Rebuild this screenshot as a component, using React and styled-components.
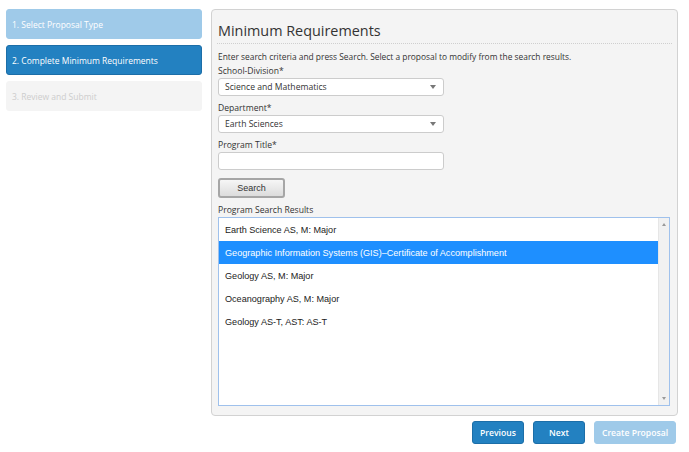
import React, { useState } from "react";
import styled, { createGlobalStyle } from "styled-components";

const steps = [
  { id: 1, label: "1. Select Proposal Type", state: "done" },
  { id: 2, label: "2. Complete Minimum Requirements", state: "active" },
  { id: 3, label: "3. Review and Submit", state: "todo" },
];

const results = [
  "Earth Science AS, M: Major",
  "Geographic Information Systems (GIS)\u2013Certificate of Accomplishment",
  "Geology AS, M: Major",
  "Oceanography AS, M: Major",
  "Geology AS-T, AST: AS-T",
];

const stepColors = {
  done: { bg: "#9fcae9", border: "#9fcae9", color: "#ffffff" },
  active: { bg: "#2381c1", border: "#1c6ea8", color: "#ffffff" },
  todo: { bg: "#f4f4f4", border: "#f4f4f4", color: "#cdcdcd" },
};

const GlobalStyle = createGlobalStyle`
  body {
    margin: 0;
    background: #ffffff;
    font-family: "Open Sans", "Liberation Sans", sans-serif;
    color: #333333;
  }
`;

const Page = styled.div`
  display: grid;
  grid-template-columns: 196px 467px;
  column-gap: 9px;
  align-items: start;
  padding: 9px 6px;
`;

const Nav = styled.nav`
  display: flex;
  flex-direction: column;
  gap: 6px;
`;

const Step = styled.div`
  height: 30px;
  box-sizing: border-box;
  display: flex;
  align-items: center;
  padding: 1px 5px 0;
  border-radius: 3px;
  font-size: 8.5px;
  background: ${p => stepColors[p.$state].bg};
  border: 1px solid ${p => stepColors[p.$state].border};
  color: ${p => stepColors[p.$state].color};
`;

const Main = styled.div`
  display: flex;
  flex-direction: column;
`;

const Panel = styled.section`
  height: 407px;
  box-sizing: border-box;
  background: #f4f4f4;
  border: 1px solid #d2d2d2;
  border-radius: 4px;
  padding: 9px 5px 0 5px;
`;

const Title = styled.h2`
  margin: 0;
  font-size: 14.4px;
  font-weight: 400;
  line-height: 24px;
  color: #333333;
  padding-left: 1px;
  border-bottom: 1px dotted #cfcfcf;
`;

const Form = styled.div`
  padding-left: 1px;
  display: flex;
  flex-direction: column;
  align-items: flex-start;
`;

const Intro = styled.p`
  margin: 6px 0 0;
  font-size: 8.4px;
  line-height: 14px;
`;

const Label = styled.label`
  display: block;
  font-size: 8.6px;
  line-height: 13px;
  margin-top: ${p => p.$gap ?? 6}px;
`;

const Field = styled.div`
  width: 226px;
  height: 18px;
  box-sizing: border-box;
  background: #ffffff;
  border: 1px solid #cccccc;
  border-radius: 3px;
  display: flex;
  align-items: center;
  justify-content: space-between;
  padding: 0 7px 0 6px;
  font-size: 8.6px;
  color: #333333;
`;

const Caret = styled.span`
  width: 0;
  height: 0;
  border-left: 3px solid transparent;
  border-right: 3px solid transparent;
  border-top: 4px solid #777777;
`;

const SearchButton = styled.button`
  margin-top: 8px;
  width: 67px;
  height: 20px;
  border: 2px solid #a6a6a6;
  border-radius: 3px;
  background: linear-gradient(#f6f6f6, #dcdcdc);
  font-family: "Liberation Sans", Arial, sans-serif;
  font-size: 9px;
  color: #333333;
  padding: 0;
`;

const ListBox = styled.div`
  width: 452px;
  height: 189px;
  box-sizing: border-box;
  background: #ffffff;
  border: 1px solid #9fc1ec;
  display: flex;
`;

const Options = styled.ul`
  list-style: none;
  margin: 0;
  padding: 0;
  flex: 1;
`;

const Option = styled.li`
  height: 23px;
  display: flex;
  align-items: center;
  padding-left: 6px;
  font-family: "Liberation Sans", Arial, sans-serif;
  font-size: 9.1px;
  background: ${p => (p.$selected ? "#1e8fff" : "transparent")};
  color: ${p => (p.$selected ? "#ffffff" : "#222222")};
`;

const ScrollTrack = styled.div`
  width: 10px;
  background: #f1f1f1;
  border-left: 1px solid #e6e6e6;
  display: flex;
  flex-direction: column;
  justify-content: space-between;
  align-items: center;
  padding: 5px 0;
`;

const Arrow = styled.span`
  width: 0;
  height: 0;
  border-left: 2.5px solid transparent;
  border-right: 2.5px solid transparent;
  ${p =>
    p.$up
      ? "border-bottom: 3px solid #9a9a9a;"
      : "border-top: 3px solid #9a9a9a;"}
`;

const Footer = styled.div`
  display: flex;
  justify-content: flex-end;
  gap: 9px;
  padding-right: 2px;
  margin-top: 5px;
`;

const NavButton = styled.button`
  height: 23px;
  width: ${p => p.$width}px;
  box-sizing: border-box;
  border-radius: 3px;
  border: 1px solid ${p => (p.$disabled ? "#9fcae9" : "#1c6ea8")};
  background: ${p => (p.$disabled ? "#9fcae9" : "#2381c1")};
  color: #ffffff;
  font-family: "Open Sans", sans-serif;
  font-size: 8.6px;
  font-weight: 600;
  padding: 0;
`;

export default function App() {
  const [selected, setSelected] = useState(1);

  return (
    <>
      <GlobalStyle />
      <Page>
        <Nav>
          {steps.map(s => (
            <Step key={s.id} $state={s.state}>
              {s.label}
            </Step>
          ))}
        </Nav>

        <Main>
          <Panel>
            <Title>Minimum Requirements</Title>
            <Form>
              <Intro>
                Enter search criteria and press Search. Select a proposal to
                modify from the search results.
              </Intro>

              <Label $gap={1}>School-Division*</Label>
              <Field>
                Science and Mathematics
                <Caret />
              </Field>

              <Label>Department*</Label>
              <Field>
                Earth Sciences
                <Caret />
              </Field>

              <Label $gap={6}>Program Title*</Label>
              <Field />

              <SearchButton>Search</SearchButton>

              <Label>Program Search Results</Label>
              <ListBox>
                <Options>
                  {results.map((r, i) => (
                    <Option
                      key={r}
                      $selected={i === selected}
                      onClick={() => setSelected(i)}
                    >
                      {r}
                    </Option>
                  ))}
                </Options>
                <ScrollTrack>
                  <Arrow $up />
                  <Arrow />
                </ScrollTrack>
              </ListBox>
            </Form>
          </Panel>

          <Footer>
            <NavButton $width={52}>Previous</NavButton>
            <NavButton $width={52}>Next</NavButton>
            <NavButton $width={82} $disabled>
              Create Proposal
            </NavButton>
          </Footer>
        </Main>
      </Page>
    </>
  );
}
